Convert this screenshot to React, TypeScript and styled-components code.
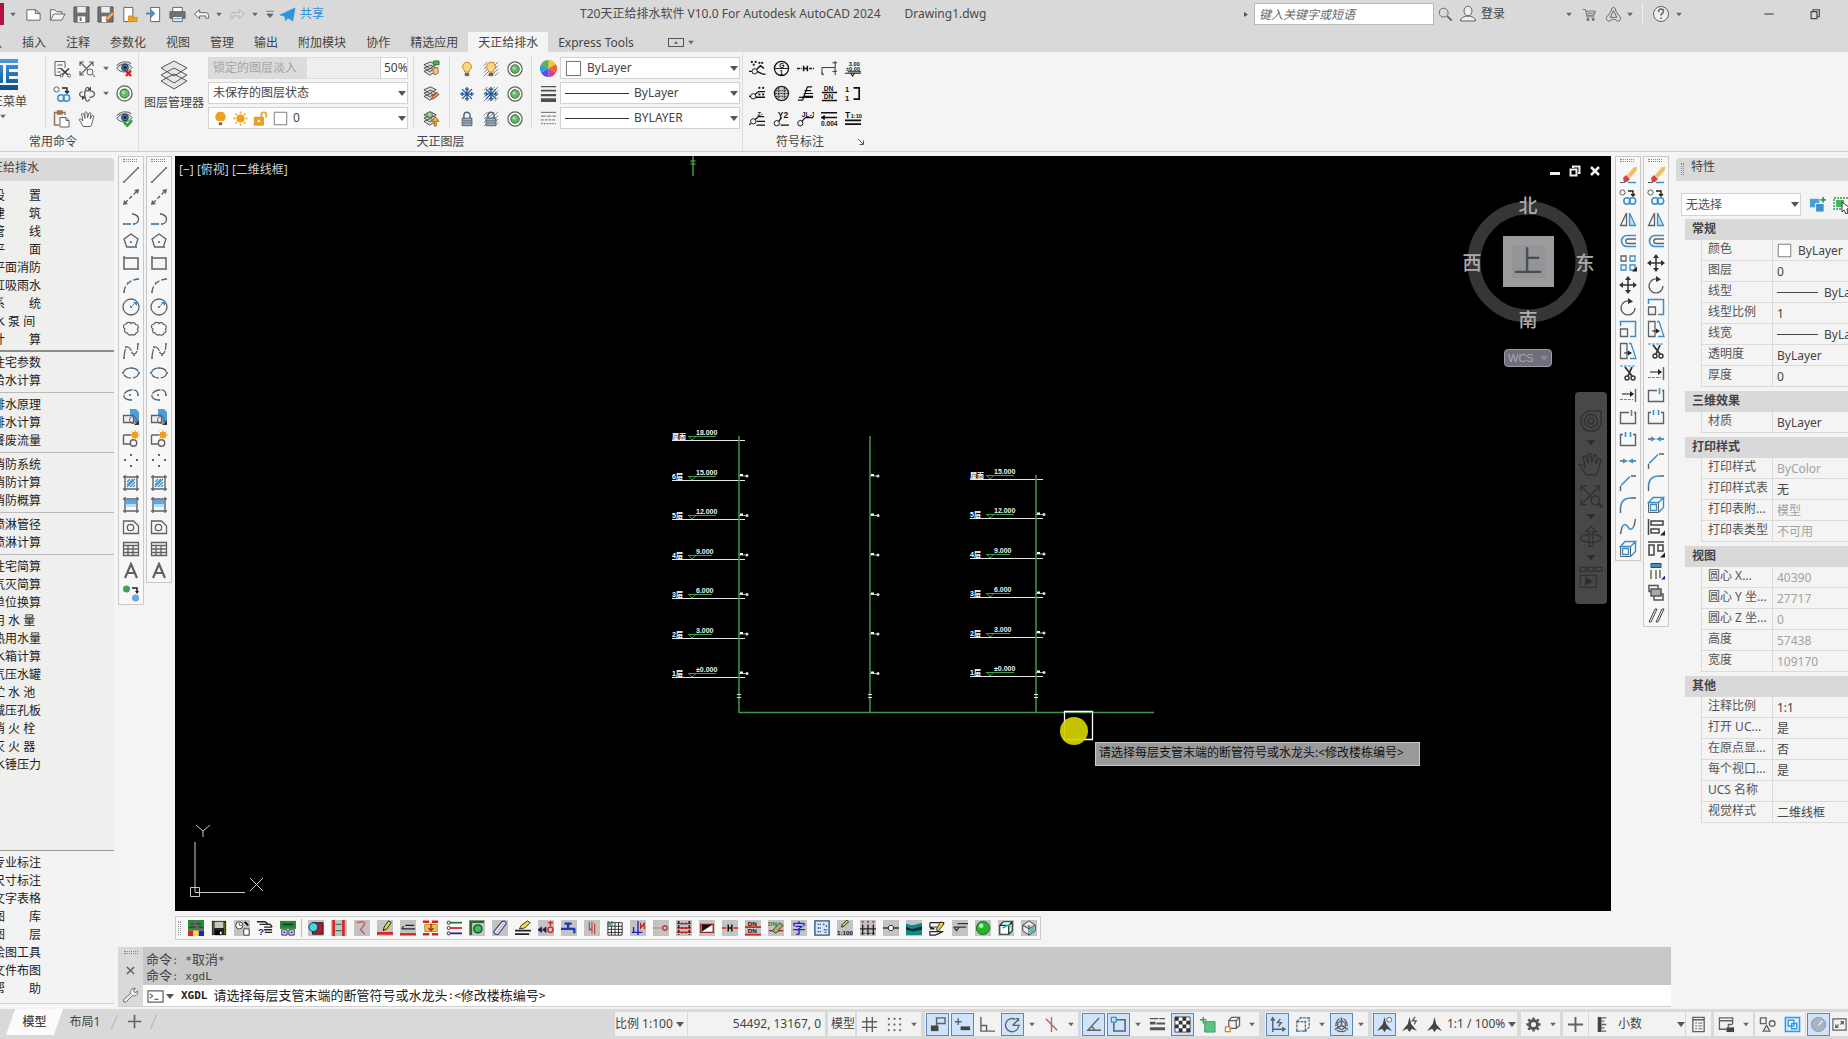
import React, { ReactNode } from 'react';
import styled, { createGlobalStyle, css } from 'styled-components';

const sans = '"Noto Sans", "Noto Sans CJK SC", sans-serif';
const mono = '"DejaVu Sans Mono", "Noto Sans CJK SC", monospace';
const G = '#5f6164';
const B = '#3d8fcb';
const O = '#f0a020';

const GlobalStyle = createGlobalStyle`
  * { box-sizing: border-box; }
  html, body, #root { margin: 0; height: 100%; }
  body { overflow: hidden; background: #f4f4f4; color: #444; font: 12px/18px ${sans}; }
  button, input, select { font: inherit; color: inherit; margin: 0; }
`;

/* ---------- glyphs ---------- */

const T = ({ x, y, s, c = '#111', children }: { x: number; y: number; s: number; c?: string; children: ReactNode }) => (
  <text x={x} y={y} fontSize={s} fill={c} stroke="none" fontWeight="700" fontFamily='"Liberation Sans", sans-serif'>{children}</text>
);
const Dots = ({ at, c = B }: { at: number[][]; c?: string }) => (
  <>{at.map(([x, y]) => <rect key={`${x}-${y}`} x={x - 1} y={y - 1} width="2" height="2" fill={c} stroke="none" />)}</>
);
const Stack = (
  <g stroke="#444" fill="#ddd">
    <path d="M1 12l7-3 6 3-7 4zM1 8.500l7-3 6 3-7 4zM1 5l7-3 6 3-7 4z" />
  </g>
);
const Hatch = <path d="M1 5l4-4M1 9l8-8M1 13l12-12M1 17L17 1M5 17L17 5M9 17l8-8M13 17l4-4" stroke="#777" strokeWidth="1" />;
const Bulb = <g><path d="M9 1.500a5 5 0 0 0-5 5c0 2.500 2.500 3.500 2.500 6h5c0-2.500 2.500-3.500 2.500-6a5 5 0 0 0-5-5z" fill="#fbd580" stroke="#c07c1c" /><path d="M7 14h4v2.500H7z" fill="#666" stroke="#555" /></g>;
const Snow = <path d="M9 1v16M1 9h16M3.500 3.500l11 11M14.500 3.500l-11 11M7 3l2 2 2-2M7 15l2-2 2 2M3 7l2 2-2 2M15 7l-2 2 2 2" stroke="#1d5595" strokeWidth="1.400" />;
const Lock = <g><path d="M5.500 8V5a3.500 3.500 0 0 1 7 0v3" stroke="#566270" strokeWidth="1.600" /><path d="M3.500 8h11v8.500h-11z" fill="#9fb0c2" stroke="#455668" /><path d="M4 11h10M4 13.500h10" stroke="#566b80" /></g>;
const Eye = <g><path d="M1 9C4 3 13 2 17 8c-4 6-12 6-16 1z" fill="#d7e4f2" stroke="#555" /><circle cx="9.500" cy="8" r="3.600" fill="#3f76ae" stroke="#234" /><circle cx="9.500" cy="8" r="1.400" fill="#111" stroke="none" /><path d="M1 6C5 1 13 1 16 4" stroke="#777" strokeWidth="1.300" /></g>;
const Hand = <path d="M5.500 16.500C3 13 2.500 11.500 1 9.500c1-1 2-.5 4 1.500L3.500 4c1-.9 2-.4 2.300.6L7 8.500 6.800 2.500c.8-1 2-.7 2.200.3L9.500 8l1.500-5c.9-.7 1.900-.2 1.800.8L12.200 9l2-3.500c1-.5 1.800.2 1.500 1-1 3.500-1.200 7-3.200 10z" />;
const Cube3 = <g><path d="M1.500 6.500h10v10h-10z" /><path d="M1.500 6.500L6 1.500h10.500l-5 5zM11.500 16.500l5-5v-10M3.500 8.500h6v6h-6z" stroke={B} strokeWidth="1.400" /></g>;
const Compass = <path d="M9 1l1.800 7.500L17 16l-5.500-2.500L9 17l-2.500-3.500L1 16l6.200-7.500z" fill="#444" stroke="none" />;
const Plate = <path d="M0 0h18v18H0z" fill="#c3c3c3" stroke="none" />;

const glyphs: Record<string, ReactNode> = {
  new: <path d="M2 4h9l5 4v7H2zM11 4v4h5" fill="#fff" />,
  open: <path d="M1.500 15V4h4.500l2 2h5.500v2.500M1.500 15L5 8.500h12L13.500 15z" fill="#f3f3f3" />,
  save: <g><path d="M1 1h16v16H1z" fill="#6d6f72" stroke="#555" /><path d="M4.500 1h9v6h-9z" fill="#eee" stroke="none" /><path d="M5 11h8v6H5z" fill="#fff" stroke="none" /><path d="M7 12h2v4H7z" fill="#666" stroke="none" /></g>,
  saveas: <g><path d="M1 1h16v16H1z" fill="#6d6f72" stroke="#555" /><path d="M4.500 1h9v6h-9z" fill="#eee" stroke="none" /><path d="M5 11h5v6H5z" fill="#fff" stroke="none" /><path d="M9.500 15.500l1-3.500 5.500-5.500 2 2-5.500 5.500z" fill="#f2b45b" stroke="#e06c3c" /></g>,
  webopen: <g><path d="M3 1.500h9.500v15H3z" fill="#fff" /><path d="M8 16.500v-6h3l1 1.500h5v4.500z" fill={O} stroke="#d88f16" /></g>,
  websave: <g><path d="M6 1.500h9.500v15H6z" fill="#fff" /><path d="M1 8h8M6 4.500L9.500 8 6 11.500" stroke={B} strokeWidth="2" /></g>,
  print: <g><path d="M4 6V1.500h10V6" fill="#fff" /><path d="M1 6h16v7H1z" fill="#717377" /><path d="M4 11h10v5.500H4z" fill="#eaf3fb" /><path d="M5.500 13.500h7" stroke={B} /></g>,
  undo: <path d="M1.500 8.500L7 4v3h6.500q3 0 3 3v3h-3v-2.500H7v3z" fill="#f5f5f5" />,
  redo: <path d="M16.500 8.500L11 4v3H4.500q-3 0-3 3v3h3v-2.500H11v3z" stroke="#b5b5b5" />,
  more: <path d="M4 5.500h10M5 9l4 4.500L13 9z" fill={G} />,
  share: <path d="M1 9.500L17 2l-2.500 14-5-3.500-2.500 3-1-5zM6 10.500L15 4l-6 8.500" fill="#2c9ae8" stroke="#1f86d0" strokeWidth=".6" />,
  search: <g><circle cx="7.500" cy="7.500" r="5" /><path d="M11.500 11.500l5 5" strokeWidth="2" /></g>,
  user: <g><ellipse cx="9" cy="6" rx="4" ry="4.800" fill="#eee" /><path d="M1.500 16c0-3.500 3-4 5-4.800h5c2 .8 5 1.300 5 4.800z" fill="#eee" /></g>,
  cart: <g><path d="M1 3h3l2 9h9M4.500 5h11.500l-1.500 5H6M6 7.500h9" /><circle cx="7" cy="15" r="1.200" fill={G} /><circle cx="13.500" cy="15" r="1.200" fill={G} /></g>,
  autodesk: <g><path d="M9 1.500c2 0 2 2 2.800 4.500l3.700 5c2 1.500 1 5-1.500 5-2 0-2.500-2-5-2s-3 2-5 2c-2.500 0-3.500-3.500-1.500-5l3.700-5C7 3.500 7 1.500 9 1.500z" /><path d="M9 5l3.500 7h-7z" /></g>,
  help: <g><circle cx="9" cy="9" r="7.500" fill="#eee" /><path d="M6.500 7q0-3 2.500-3t2.500 2.300c0 2-2.500 2-2.500 4.200" strokeWidth="1.600" /><path d="M9 12.500v1.500" strokeWidth="1.800" /></g>,
  min: <path d="M3 9h12" strokeWidth="1.300" stroke="#333" />,
  restore: <path d="M4 6h7.500v9H4zM6.500 6V3.500h8v9h-3" strokeWidth="1.500" stroke="#444" />,
  /* common commands */
  cut: <g><path d="M12 8V1.500H2v14h6M4.500 5h5M4.500 8.500h4M4.500 12h3" /><path d="M8 8.500l7 6.500M16 8.500L9 15" stroke="#333" strokeWidth="1.500" /><circle cx="8.500" cy="15.500" r="1.500" /><circle cx="16" cy="15.500" r="1.500" /></g>,
  zoomx: <g><path d="M2 2l8 8M15 2L2 15M2 6V2h4M11 2h4v4M2 11v4h4" strokeWidth="1.200" /><circle cx="12" cy="12" r="3" fill="#f4f4f4" /><path d="M14.500 14.500l2.500 2.500" stroke="#998" strokeWidth="1.600" /></g>,
  eyex: <g>{Eye}<path d="M10.500 11.500l5.500 5.500M16 11.500l-5.500 5.500" stroke="#c22" strokeWidth="2.400" /></g>,
  eyeok: <g>{Eye}<path d="M8.500 13l3.500 3.500 5-5.500" stroke="#2a2" strokeWidth="2.800" /></g>,
  copy: <g><circle cx="3.500" cy="4.500" r="2.600" /><path d="M9 3h5v5M12 6l2 2 2-2" stroke="#222" strokeWidth="1.400" /><circle cx="8" cy="13" r="3.200" stroke={B} strokeWidth="1.500" /><circle cx="13.500" cy="13" r="3.200" stroke={B} strokeWidth="1.500" /></g>,
  orbit: <g strokeWidth="1.300"><path d="M6 12.500C1 12 0 8 4.500 6.500M8 5.800c5-.8 9 1 8.500 3.500-.3 1.700-2.500 2.800-5 3.200" /><path d="M11.500 14c-1 3-3 3.500-4 0-1-3-1-7 0-9.500 1-3 3-2.500 4 0" /><path d="M4 10.500l3.500 2-3.500 2.500zM9.500 4.500l3.500 1V1.500z" fill="#444" stroke="none" /></g>,
  target: <g><circle cx="9" cy="9" r="8" stroke="#5b6a5b" strokeWidth="1.400" fill="#f5f8f5" /><circle cx="9" cy="9" r="4.800" fill="#67b96a" stroke="#3e5e40" /><circle cx="8" cy="8" r="1.800" fill="#a9dfaa" stroke="none" /></g>,
  paste: <g><path d="M12 5V2.500H1.500V15H6M4.500 1h4.500v3H4.500z" stroke="#9a7355" strokeWidth="1.500" /><path d="M7 7.500h6l3 3V17H7zM13 7.500v3h3" fill="#fff" /></g>,
  pan: <g fill="#fff">{Hand}</g>,
  layerA: <g>{Stack}<path d="M11 1h6v4h-6z" fill="#4bb25e" stroke="#2a7a3b" /><path d="M10 9l6-1v6l-4 2z" fill="#f3c38b" stroke="#a2703c" /></g>,
  layerB: <g>{Stack}<path d="M9 15l1-3 5-4 2 2-5 4z" fill="#e89466" stroke="#8f4a23" /></g>,
  layerC: <g>{Stack}<circle cx="7" cy="5" r="3" fill="#9ccf8e" /><path d="M12 17v-5H9l4-5 4 5h-3v5z" fill="#f7b32b" stroke="#a06a10" /></g>,
  bulb: Bulb, bulbh: <g>{Hatch}{Bulb}</g>, snow: Snow, snowh: <g>{Hatch}{Snow}</g>, lock: Lock, lockh: <g>{Hatch}{Lock}</g>,
  bulbO: <g><path d="M9 1a6 6 0 0 0-3.500 11h7A6 6 0 0 0 9 1z" fill={O} stroke="none" /><path d="M7 13.500h4v3.500H7z" fill="#666" stroke="none" /></g>,
  sunO: <g stroke={O} strokeWidth="1.800"><circle cx="9" cy="9" r="4" fill={O} /><path d="M9 .5v2.500M9 15v2.500M.5 9H3M15 9h2.500M3 3l1.700 1.700M13.300 13.300L15 15M15 3l-1.700 1.700M4.700 13.300L3 15" /></g>,
  unlockO: <g><path d="M1.500 7.500h11v9.500h-11z" fill={O} stroke="#d98f14" /><path d="M10 7.500V4.500q0-3 3-3t3 3V8" stroke={O} strokeWidth="2" /><circle cx="7" cy="12" r="1.500" fill="#fff" stroke="none" /></g>,
  box: <path d="M1.500 1.500h15v15h-15z" fill="#fff" stroke="#666" />,
  wheel: <g stroke="none"><path d="M9 9V0a9 9 0 0 1 7.800 4.500z" fill="#f7c52f" /><path d="M9 9l7.800-4.500a9 9 0 0 1 0 9z" fill="#f0642f" /><path d="M9 9l7.800 4.500A9 9 0 0 1 9 18z" fill="#d43f9c" /><path d="M9 9v9a9 9 0 0 1-7.800-4.500z" fill="#5f4fd0" /><path d="M9 9l-7.800 4.500a9 9 0 0 1 0-9z" fill="#2f9be0" /><path d="M9 9L1.200 4.500A9 9 0 0 1 9 0z" fill="#55b845" /></g>,
  weights: <g fill="#505050" stroke="none"><path d="M1 1h16v1.500H1zM1 5h16v2H1zM1 9.500h16V12H1zM1 14h16v4H1z" /></g>,
  types: <g stroke="#666" strokeWidth="1"><path d="M1 2.500h16" /><path d="M1 6.500h16" strokeDasharray="5 1" /><path d="M1 10.500h16" strokeDasharray="3 1" /><path d="M1 14.500h16" strokeDasharray="2 1" /></g>,
  /* symbol annotation */
  s1: <g stroke="#111"><circle cx="6" cy="12" r="2.800" /><path d="M0 12h3M8 10l4-4 4 3M8.500 12l6 3h3" strokeWidth="1.400" /><Dots c="#111" at={[[3, 2], [7, 2], [5, 5], [14, 3], [11, 3]]} /></g>,
  s2: <g stroke="#111"><circle cx="9" cy="9" r="7.500" strokeWidth="1.400" /><path d="M1 9h16" /><T x={6.500} y={8} s={7}>G</T><T x={7} y={16} s={7}>1</T></g>,
  s3: <g stroke="#111" strokeWidth="1.600"><path d="M0 9h5M13 9h5" strokeDasharray="3 1" /><path d="M7 6v6M11 6v6M7 9h4" /></g>,
  s4: <path d="M1 16V8h14M15 1v15M12 3h5M12 12h5M1 13l2 3" stroke="#333" />,
  s5: <g stroke="#222"><T x={4} y={6} s={6}>3.00</T><path d="M0 14h17M3 12.500h14M6 14l2 3 2-3z" strokeWidth="1.200" /><T x={1} y={11.500} s={6}>±0.00</T></g>,
  s6: <g stroke="#111"><circle cx="4.500" cy="12" r="2.800" /><path d="M0 12h2M6.500 10L10 7h7M7 13h10" strokeWidth="1.400" /><Dots c="#111" at={[[11, 3], [15, 3], [11, 10], [15, 10]]} /></g>,
  s7: <g stroke="#222"><circle cx="9" cy="9" r="7.500" fill="#ccc" strokeWidth="1.400" /><path d="M3 6h12M2 9h14M3 12h12M6 3v12M12 3v12" strokeDasharray="2 1" /></g>,
  s8: <path d="M1 16h5L11 2h5M8 6h7M7 9h10M6 12h11M2 13h15" stroke="#111" strokeWidth="1.300" />,
  s9: <g stroke="#111"><T x={3} y={6.500} s={7}>DN</T><path d="M1 8h16M1 16.500h16" strokeWidth="1.600" /><T x={3} y={15} s={7}>DN</T></g>,
  s10: <g stroke="#111"><T x={0} y={7} s={8}>1</T><T x={0} y={17} s={8}>1</T><path d="M9 3h6v12H9" strokeWidth="1.800" /></g>,
  s11: <g stroke="#111"><circle cx="4.500" cy="12" r="2.800" /><path d="M0 15h2M6.500 10L10 7h6M8 12h9M8 16h9" strokeWidth="1.300" /><T x={9} y={6} s={6}>Z-</T></g>,
  s12: <g stroke="#111"><circle cx="4" cy="14" r="2.800" /><path d="M6 12l3-4M8 16h9" strokeWidth="1.500" /><T x={5} y={8} s={9}>Y2</T></g>,
  s13: <g stroke="#111"><circle cx="3.500" cy="14" r="2.800" /><path d="M5 12l4-4h8" strokeWidth="1.300" /><T x={5} y={7} s={7}>JL-1</T></g>,
  s14: <g stroke="#111"><path d="M0 3h17M0 8h17M4 6L1 8l3 2" strokeWidth="1.600" /><T x={0} y={16.500} s={7}>0.004</T></g>,
  s15: <g stroke="#111"><T x={0} y={8} s={9}>T</T><T x={6} y={8} s={6}>1:10</T><path d="M0 11h17M0 15h17" strokeWidth="2" /></g>,
  /* draw tools */
  line: <g><path d="M2 16L16 2" strokeWidth="1.300" /><Dots at={[[2, 16], [16, 2]]} /></g>,
  xline: <g><path d="M3 15L15 3" strokeWidth="1.300" strokeDasharray="4 2" /><path d="M1 17l1-5 4 4zM17 1l-5 1 4 4z" fill={G} stroke="none" /><Dots at={[[9, 9]]} /></g>,
  pline: <g><path d="M2 14h7M12 14q4-.5 4.500-4.500T11 4" strokeWidth="1.300" /><Dots at={[[2, 14], [11, 4], [12, 14], [8, 14]]} /></g>,
  polygon: <g><path d="M9 2l7 5-2.700 8H4.700L2 7z" strokeWidth="1.300" /><Dots at={[[9, 10], [14, 15]]} /></g>,
  rect: <g><path d="M2 4h14v11H2z" strokeWidth="1.500" /><Dots at={[[2, 3], [16, 15]]} /></g>,
  arc: <g><path d="M2 16Q3 5 16 3" strokeDasharray="6 2" strokeWidth="1.300" /><Dots at={[[2, 16], [6, 7], [16, 3]]} /></g>,
  circle: <g><circle cx="9" cy="9" r="8" strokeWidth="1.300" /><path d="M9 9l4-4" stroke={B} /><path d="M11 4h4v4z" fill={B} stroke="none" /><Dots at={[[9, 9]]} /></g>,
  cloud: <path d="M3 9a2.600 2.600 0 0 1 1-5 3 3 0 0 1 5-.5 2.600 2.600 0 0 1 4.500 1 2.600 2.600 0 0 1 2 4.500 2.500 2.500 0 0 1-1.500 4 2.800 2.800 0 0 1-4.500 1.500 2.500 2.500 0 0 1-4-1.500A2.500 2.500 0 0 1 3 9z" strokeWidth="1.200" />,
  spline: <g><path d="M2 15Q3 4 6 5t4 6q5 4 6-8" strokeDasharray="8 1" strokeWidth="1.300" /><Dots at={[[2, 16], [4, 5], [12, 13], [16, 2]]} /></g>,
  ellipse: <g><ellipse cx="9" cy="9" rx="7.500" ry="5" strokeDasharray="8 2" strokeWidth="1.300" /><Dots at={[[1, 9], [9, 4], [17, 9]]} /></g>,
  earc: <g><path d="M8 14Q1 13 2 9t7-5 7 4" strokeWidth="1.300" strokeDasharray="9 1" /><Dots at={[[8, 9], [16, 9], [9, 14]]} /></g>,
  insert: <g><path d="M8 1h6l3 3v10h-9z" fill="#4d9fdc" stroke="none" /><path d="M1.500 7.500h10v7h-10z" fill="#eee" strokeWidth="1.300" /><circle cx="11" cy="12" r="3.500" /><path d="M12 17h5v-5z" fill="#333" stroke="none" /></g>,
  mkblock: <g><path d="M1.500 5h8M1.500 5v9H9" strokeWidth="1.400" /><circle cx="11.500" cy="13" r="3.200" strokeWidth="1.400" /><g stroke={O} strokeWidth="1.600"><circle cx="13" cy="5" r="2.500" fill={O} /><path d="M13 0v10M8 5h10M9.500 1.500l7 7M16.500 1.500l-7 7" strokeWidth="1" /></g></g>,
  point: <Dots c={G} at={[[9, 3], [3, 8], [15, 8], [9, 14]]} />,
  hatch: <g><path d="M1 3h16M1 15h16M3 1v16M15 1v16" strokeWidth="1.400" /><path d="M5 8l3-3M5 11l6-6M5 13l8-8M8 13l5-5M11 13l2-2" stroke={B} strokeWidth="1.200" /></g>,
  grad: <g><path d="M4 4h10v7H4z" fill="#5aa9e4" stroke="none" /><path d="M4 8h10v3H4z" fill="#b9dcf5" stroke="none" /><path d="M1 3h16M1 15h16M3 1v16M15 1v16" strokeWidth="1.400" /></g>,
  region: <g><path d="M1.500 3h10l5 5v7.500h-15z" strokeWidth="1.300" /><circle cx="8.500" cy="9.500" r="3.200" strokeWidth="1.300" /></g>,
  table: <path d="M1.500 2.500h15v13h-15zM1.500 5.500h15M1.500 9h15M1.500 12.500h15M6 5.500v10M11 5.500v10" strokeWidth="1.300" />,
  text: <path d="M3 16L9 2l6 14M5.500 11h7" strokeWidth="2.200" />,
  swap: <g><circle cx="4.500" cy="5" r="3.500" fill="#39a35a" stroke="none" /><path d="M10 4h5v3" stroke="#222" strokeWidth="1.500" /><path d="M13 7l2 3 2-3z" fill="#222" stroke="none" /><circle cx="13.500" cy="14" r="3.500" fill="#6aa5d8" stroke="none" /></g>,
  /* modify tools */
  erase: <g><path d="M8 9l7-8h3v3l-7 8z" fill="#f6bd62" stroke="none" /><path d="M4 12l3-3 4 4-3 3H5z" fill="#d9433f" stroke="none" /><path d="M1 16.500h5" /><path d="M9 16.500h8" stroke={B} strokeWidth="1.500" /></g>,
  mirror: <g><path d="M7.500 3v12.500H1.500z" strokeWidth="1.300" /><path d="M10.500 3v12.500h6z" fill="#bfdff5" stroke={B} strokeWidth="1.300" /></g>,
  offset: <g><path d="M17 3.500H8a5.500 5.500 0 0 0 0 11h9" stroke={B} strokeWidth="1.600" /><path d="M17 7H9a2.200 2.200 0 0 0 0 4.500h8" strokeWidth="1.300" /></g>,
  array: <g strokeWidth="1.300"><path d="M2 2h5v5H2z" /><path d="M11 2h5v5h-5zM2 11h5v5H2zM11 11h5v5h-5z" stroke={B} /><path d="M13 17.500h5v-5z" fill="#222" stroke="none" /></g>,
  move: <g><path d="M9 3v12M3 9h12" stroke="#333" strokeWidth="1.500" /><path d="M9 0l3 4H6zM9 18l3-4H6zM0 9l4-3v6zM18 9l-4-3v6z" fill="#333" stroke="none" /></g>,
  rotate: <g><path d="M11 3.200A7 7 0 1 0 16 10" strokeWidth="1.400" /><path d="M9 0l5 3.500L9 6z" fill="#333" stroke="none" /></g>,
  scale: <g><path d="M1.500 9h7v7.500h-7z" strokeWidth="1.300" /><path d="M1.500 6V1.500h15v15H11" stroke={B} strokeWidth="1.500" /></g>,
  stretch: <g><path d="M8 1.500H1.500v15H8z" strokeWidth="1.300" /><path d="M10 1.500h2l5 15h-6" stroke={B} strokeWidth="1.300" /><path d="M5 11h6" stroke="#222" /><path d="M9 8.500l4 2.500-4 2.500z" fill="#222" stroke="none" /></g>,
  trim: <g><path d="M1 2h16" stroke={B} strokeDasharray="3 1" /><path d="M6 3l7 9M13 3l-4 9" stroke="#333" strokeWidth="1.800" /><circle cx="8" cy="14" r="2" stroke="#333" strokeWidth="1.400" /><circle cx="14" cy="14" r="2" stroke="#333" strokeWidth="1.400" /></g>,
  extend: <g><path d="M16.500 3v13M3 8h9" strokeWidth="1.400" /><path d="M11 5l4 3-4 3z" fill="#222" stroke="none" /><path d="M1 13.500h13" stroke={B} strokeDasharray="3 1" /></g>,
  breakpt: <g><path d="M10 4.500H1.500v11h15v-11H15" strokeWidth="1.400" /><path d="M12.500 2v6" stroke={B} strokeWidth="1.600" /></g>,
  breakg: <g><path d="M4 4.500H1.500v11h15v-11H14" strokeWidth="1.400" /><path d="M6.500 2v5M11.500 2v5" stroke={B} strokeWidth="1.600" /></g>,
  join: <g><path d="M1 9h5M12 9h5" strokeWidth="1.300" /><path d="M4 6.500L9 9l-5 2.500zM14 6.500L9 9l5 2.500z" fill={B} stroke="none" /></g>,
  chamfer: <g><path d="M1.500 17v-5M12 2h5" strokeWidth="1.400" /><path d="M2 11.500L11 2.500" stroke={B} strokeWidth="1.600" /></g>,
  fillet: <g><path d="M1.500 17v-5M12 2h5" strokeWidth="1.400" /><path d="M1.500 12Q2 2 12 2" stroke={B} strokeWidth="1.600" /></g>,
  blend: <g><path d="M1.500 16l1.500-7M15 8l1.500-7" strokeWidth="1.400" /><path d="M3 9q3-5 6 0t6-1" stroke={B} strokeWidth="1.600" /></g>,
  explode: Cube3,
  alignA: <g><path d="M1.500 1v16M4 3h12v4H4zM4 11h8v4H4z" strokeWidth="1.500" stroke="#444" /><path d="M13 17.500h5v-5z" fill="#222" stroke="none" /></g>,
  alignB: <g><path d="M1 2h16M2 5h5v10H2zM11 5h5v6h-5z" strokeWidth="1.500" stroke="#444" /><path d="M13 17.500h5v-5z" fill="#222" stroke="none" /></g>,
  alignC: <g><path d="M4 1.500h10v4H4z" fill="#4c8fc8" stroke="#346" /><path d="M4 8v9M9 8v9M13 8v8" strokeWidth="1.800" stroke="#787" /><path d="M14 17.500h4v-4z" fill="#22a" stroke="none" /></g>,
  order: <g strokeWidth="1.500" stroke="#555"><path d="M2 1.500h9v6H2z" /><path d="M7 10h9v6H7z" /><path d="M4 5h10v7H4z" fill="#aaa" /></g>,
  slashes: <path d="M2 16L8 3h2L4 16zM9 16l6-13h2l-6 13z" stroke="#444" />,
  pickadd: <g stroke="none"><path d="M1 3h10v9H1z" fill="#4d9fdc" /><path d="M7 8h9v9H7z" fill="#3d8fcb" stroke="#f4f4f4" /><path d="M12 4h6M15 1v6" stroke="#2da04c" strokeWidth="1.800" /></g>,
  qselect: <g><path d="M1 2h16v11H1z" stroke="#2da04c" strokeWidth="1.400" strokeDasharray="2 1" /><path d="M3 4h8v7H3z" fill="#48b365" stroke="none" /><path d="M9 6l8 6-3 1 1 4-2 1-2-4-2 2z" fill="#fff" stroke="#333" /></g>,
  wrench: <path d="M2 16l-.5-2.500L9 7c-1-3 1-6 5-5.500l-2 2.500 2 2 2.500-1.500C17 8 14 10 11 9l-7 7z" fill="#eee" />,
  close: <path d="M4 4l10 10M14 4L4 14" strokeWidth="2" />,
  prompt: <g><path d="M1 3h16v12H1z" fill="#fff" strokeWidth="1.300" /><path d="M3 6l3 2.500L3 11M8 12h4" strokeWidth="1.200" /></g>,
  plus: <path d="M9 1v16M1 9h16" strokeWidth="2" />,
  /* pipe toolbar */
  p1: <g stroke="none"><path d="M0 0h18v12H0z" fill="#2c8b38" /><path d="M3 4h12M1 8h16" stroke="#174d1f" strokeWidth="1.500" /><path d="M6 2l6 9" stroke="#a04090" strokeWidth="3" /><path d="M0 12h6v6H0z" fill="#d22" /><path d="M6 12h6v6H6z" fill="#fd3" /><path d="M12 12h6v6h-6z" fill="#22c" /></g>,
  p2: <g stroke="none"><path d="M1 1h16v16H1z" fill="#222" /><path d="M4 2h10v7H4z" fill="#c8c8b8" /><path d="M2 2h1v14H2zM15 3h1v13h-1z" fill="#880" /><path d="M5 12h7v5H5z" fill="#000" /><path d="M10 13h2v3h-2z" fill="#fff" /></g>,
  p3: <g>{Plate}<circle cx="6" cy="6" r="4" fill="#fff" stroke="#333" /><path d="M6 3v3h3" stroke="#a33" /><path d="M11 10h6v7h-6z" fill="#fff" stroke="#333" /><path d="M12 2l4 4" stroke="#000" strokeWidth="2" /></g>,
  p4: <g stroke="#222"><path d="M0 2h9l4 3M3 5h12l2 3M8 8h9M8 11h9M9 14h8" strokeWidth="1.500" /><T x={1} y={17} s={11} c="#22a">?</T></g>,
  p5: <g stroke="none"><path d="M0 1h18v9H0z" fill="#28863a" /><path d="M3 5h12" stroke="#0e4419" strokeWidth="2" /><path d="M2 11h6v6H2zM10 11h6v6h-6z" fill="#dde" stroke="#225" /><Dots c="#22a" at={[[5, 14], [13, 14]]} /></g>,
  p6: <g>{Plate}<path d="M5 3h12v13H5z" fill="#a6202a" stroke="#222" /><circle cx="6" cy="8" r="5" fill="#3fd8e8" stroke="#126" /></g>,
  p7: <g>{Plate}<path d="M3 0v18M14 0v18" stroke="#d22" strokeWidth="3" /><path d="M5 5h7M12 12H5" stroke="#285" strokeWidth="1.500" /></g>,
  p8: <g>{Plate}<path d="M3 3q12-3 8 3t-4 5 5 5" stroke="#c55" strokeWidth="1.500" /></g>,
  p9: <g>{Plate}<path d="M0 15h18" stroke="#d22" strokeWidth="3" /><path d="M7 12l1-4 5-7 3 2-5 7z" fill="#dd3" stroke="#111" /></g>,
  p10: <g>{Plate}<path d="M0 16h18" stroke="#d22" strokeWidth="2.500" /><path d="M2 10h15M6 6h10M2 10l2-3" stroke="#222" strokeWidth="1.300" /></g>,
  p11: <g><path d="M0 2h18M0 16h18" stroke="#d22" strokeWidth="3" strokeDasharray="7 3" /><path d="M2 5h14v8H2z" fill="#e8c84a" stroke="#a83" /><path d="M9 4v8M6 9l3 3 3-3" stroke="#a22" strokeWidth="1.500" /></g>,
  p12: <g strokeWidth="2"><path d="M3 3h15" stroke="#2a7a3a" /><path d="M3 9h15" stroke="#d22" /><path d="M3 15h15" stroke="#22a" /><g fill="#fff" stroke="#222" strokeWidth="1"><circle cx="3" cy="3" r="1.800" /><circle cx="3" cy="9" r="1.800" /><circle cx="3" cy="15" r="1.800" /></g></g>,
  p13: <g>{Plate}<path d="M2 17V2h15" stroke="#2a6a2a" strokeWidth="3" /><circle cx="10" cy="10" r="4.500" fill="#3ac04a" stroke="#143" strokeWidth="1.500" /></g>,
  p14: <g>{Plate}<path d="M2 13L11 2q4-2 5 2L7 16q-4 1-5-3z" fill="#eef" stroke="#447" strokeWidth="1.300" /><path d="M5 14l9-11" stroke="#88a" /></g>,
  p15: <g><path d="M0 12h18M0 16h16" stroke="#222" strokeWidth="2" /><path d="M5 10l2-4 7-5 3 2-6 6z" fill="#e8e03a" stroke="#222" /></g>,
  p16: <g>{Plate}<path d="M0 11l4-3v6l-4-3M5 11l4-3v6l-4-3" stroke="#225" fill="#225" /><circle cx="14" cy="11" r="3" stroke="#c22" strokeWidth="1.500" /><path d="M14 1v6M11 3h6" stroke="#c22" strokeWidth="1.500" /></g>,
  p17: <g>{Plate}<path d="M0 10h16M8 10V4M4 4h8M15 10v5" stroke="#23b" strokeWidth="2.600" /></g>,
  p18: <g>{Plate}<path d="M6 2v10M9 2v13M12 4v12M6 12l3-3" stroke="#b44" strokeWidth="1.300" /></g>,
  p19: <g stroke="#222"><path d="M1 3h16v14H1zM1 7h16M1 10.500h16M1 14h16M5 7v10M9 3v14M13 3v14" fill="#fff" /><T x={0} y={7} s={8} c="#383">M</T></g>,
  p20: <g>{Plate}<path d="M2 14h12M4 8v6M9 1v16" stroke="#22b" strokeWidth="1.500" /><path d="M12 3v6l4-5v6" stroke="#b22" strokeWidth="1.400" /></g>,
  p21: <g>{Plate}<path d="M0 9h11" stroke="#777" strokeDasharray="3 1" /><circle cx="13.500" cy="9" r="2.500" stroke="#c33" strokeWidth="1.500" /></g>,
  p22: <g>{Plate}<path d="M1 4h16M1 9h16M1 14h16" stroke="#c22" strokeWidth="1.500" /><path d="M3 1v16M15 1v16" stroke="#222" strokeDasharray="3 2" strokeWidth="2" /><Dots c="#a22" at={[[7, 4], [11, 4], [7, 9], [11, 9], [7, 14], [11, 14]]} /></g>,
  p23: <g>{Plate}<path d="M2 5h14v9H2z" fill="#fff" stroke="#922" strokeWidth="1.500" /><path d="M3 13.300V5.300h12z" fill="#111" stroke="none" /></g>,
  p24: <g>{Plate}<path d="M0 9h5M13 9h5" stroke="#d22" strokeWidth="1.500" /><path d="M7 5v8M11 5v8M7 9h4" stroke="#111" strokeWidth="1.700" /></g>,
  p25: <g>{Plate}<path d="M0 8h18M0 16.500h18" stroke="#d22" strokeWidth="2" /><T x={3} y={6.500} s={7}>DN</T><T x={3} y={15} s={7}>DN</T></g>,
  p26: <g>{Plate}<T x={0} y={7} s={7} c="#283">DN</T><path d="M1 12h16" stroke="#b22" strokeWidth="1.600" /><path d="M5 12l8-9 4 3-8 9z" fill="#9b4" stroke="#525" /></g>,
  p27: <g>{Plate}<text x="1.500" y="14.500" fontSize="15" fill="#22c" stroke="none" fontFamily='"Noto Sans CJK SC", sans-serif' fontWeight="500">字</text></g>,
  p28: <g stroke="#24548c"><path d="M1 1h16v16H1z" fill="#dbe9f7" strokeWidth="1.500" /><path d="M4 5h4M4 9h4M4 13h4M11 4v3M14 6v3M11 11h4M12 14h3" strokeWidth="1.500" strokeDasharray="2 1" /></g>,
  p29: <g>{Plate}<path d="M5 8l1-3 5-5 2 2-5 5z" fill="#cc4" stroke="#222" /><T x={0} y={17} s={7}>1:100</T></g>,
  p30: <g>{Plate}<path d="M3 5v12M9 5v12M15 5v12M0 10h18" stroke="#222" strokeWidth="1.500" /><Dots c="#c22" at={[[3, 2], [9, 2], [15, 2]]} /><path d="M1 15h16" stroke="#222" strokeDasharray="2 1" /></g>,
  p31: <g>{Plate}<path d="M0 9h18" stroke="#222" strokeWidth="1.500" /><circle cx="9" cy="9" r="3" fill="#fff" stroke="#222" /></g>,
  p32: <g stroke="none">{Plate}<path d="M0 4l6 2 5-1 7-2v14H0z" fill="#0e8a86" /><path d="M0 8l7 2 11-3v4l-10 2-8-2z" fill="#0a2f38" /></g>,
  p33: <g stroke="#222"><path d="M1 3h16M1 3v5l5 2H1M1 13h15l-9 4H1z" fill="#fff" strokeWidth="1.300" /><path d="M8 11l5-9 4 2-6 8z" fill="#e5d63a" /><path d="M1 8h8" /></g>,
  p34: <g>{Plate}<path d="M2 8h14M6 4h12M2 8l3 4 3-4" stroke="#333" strokeWidth="1.400" /></g>,
  p35: <g>{Plate}<circle cx="9" cy="9" r="7.500" fill="#28b32e" stroke="#176b1b" /><circle cx="7" cy="6.500" r="2.500" fill="#b7f0b8" stroke="none" /></g>,
  p36: <g>{Plate}<path d="M2 6h10v10H2zM2 6l4-4h10l-4 4M12 16l4-4V2" fill="#fff" stroke="#133" strokeWidth="1.300" /><path d="M5 9l8-4" stroke="#2bb" strokeWidth="2" /></g>,
  p37: <g>{Plate}<path d="M9 1l7 5v6l-7 5-7-5V6zM9 6v11M2 6l7 4 7-4" fill="#eee" stroke="#333" /><path d="M9 10l6-3v5l-6 4z" fill="#58c0b8" stroke="none" /></g>,
  /* status bar */
  grid: <path d="M6 1v16M12 1v16M1 6h16M1 12h16" strokeWidth="1.500" />,
  dots: <Dots c={G} at={[[3, 3], [9, 3], [15, 3], [3, 9], [9, 9], [15, 9], [3, 15], [9, 15], [15, 15]]} />,
  infer: <g><path d="M8 2h9v6H8zM8 2v8" strokeWidth="1.500" /><path d="M2 10h8v6H2z" fill="#444" stroke="none" /></g>,
  dyn: <g><path d="M1 6h7M4.500 2.500v7" strokeWidth="1.500" /><path d="M7 11h10v4H7z" fill="#444" stroke="none" /></g>,
  ortho: <path d="M2 1v15h15M2 10h6v6" strokeWidth="1.500" />,
  polar: <g><path d="M15.500 11A7 7 0 1 1 12 3.500M9 10h8M9 10l6-6" strokeWidth="1.400" /><path d="M12 2h4v4z" fill={G} stroke="none" /></g>,
  iso: <g strokeWidth="1.400"><path d="M9 1v16" stroke="#4a9a5a" /><path d="M3 3l12 12" stroke="#c55" /></g>,
  otrack: <path d="M15 2L3 15h14M7 11l3 3" strokeWidth="1.500" />,
  osnap: <g><path d="M4 4h12v12H4z" strokeWidth="1.600" /><path d="M1.500 1.500h5v5h-5z" fill="#cfe3fa" stroke={B} strokeWidth="1.400" /></g>,
  lwt: <g fill="#555" stroke="none"><path d="M1 2h9v1.500H1zM11 2h6v1.500h-6zM1 6h6v3H1zM8 7h9v2H8zM1 12h16v3H1z" /></g>,
  trans: <g><path d="M1 1h16v16H1z" fill="#fff" stroke="#444" /><path d="M1 1h4v4H1zM9 1h4v4H9zM5 5h4v4H5zM13 5h4v4h-4zM1 9h4v4H1zM9 9h4v4H9zM5 13h4v4H5zM13 13h4v4h-4z" fill="#333" stroke="none" /></g>,
  cycle: <g><path d="M6 6h11v11H6z" fill="#5fbf84" stroke="#3c9a60" /><path d="M1 4h7M4.500 1v7" stroke="#3a4" strokeWidth="1.600" /></g>,
  osnap3: <g><path d="M5 5l3-3.500h8.500V10L13 13M5 5h8v8H5zM13 5l3.500-3.500" strokeWidth="1.300" /><path d="M1.500 11.500h5v5h-5z" fill="#fff" stroke="#d88030" strokeWidth="1.400" /></g>,
  ducs: <g strokeWidth="1.500"><path d="M4 17V3M2 5l2-3 2 3M4 14h12M14 12l3 2-3 2" /><path d="M12 3l-3 4h4l-3 4" /></g>,
  filter: <g><path d="M3 6h9v10H3zM3 6l4-4h9v10l-4 4" strokeWidth="1.300" strokeDasharray="3 1" /><Dots at={[[3, 6], [12, 6], [3, 16], [12, 16], [7, 2], [16, 2]]} /></g>,
  gizmo: <g strokeWidth="1.300"><path d="M9 5l4 2.500v4.500l-4 2.500-4-2.500V7.500z" /><path d="M9 10V1.500M9 10l-7 4.500M9 10l7 4.500" strokeWidth="1.600" /><path d="M3 11q0-6 4-8M15 11q0-6-4-8M4 15q5 3 10 0" /></g>,
  annoA: <g>{Compass}<circle cx="14" cy="4" r="2.500" fill="#fff" /></g>,
  annoB: <g>{Compass}<path d="M15 1l-3 4h4l-2 4" strokeWidth="1.500" /></g>,
  annoC: Compass,
  gear: <g><circle cx="9" cy="9" r="4.200" strokeWidth="3" stroke="#555" /><path d="M9 1.500v3M9 13.500v3M1.500 9h3M13.500 9h3M3.500 3.500l2 2M12.500 12.500l2 2M14.500 3.500l-2 2M5.500 12.500l-2 2" strokeWidth="2.500" stroke="#555" /></g>,
  ruler: <g><path d="M5 1h4v16H5z" fill="#444" stroke="none" /><path d="M9 2h5M9 5.500h3M9 9h5M9 12.500h3M9 16h5" strokeWidth="1.400" /></g>,
  props: <g><path d="M3 1.500h12v15H3zM3 4h12" strokeWidth="1.400" /><path d="M5.500 7.500h2M9 7.500h4M5.500 10.500h2M9 10.500h4M5.500 13.500h2M9 13.500h4" /></g>,
  lockui: <g><path d="M9 14H1.500V2h14v7M1.500 5h14" strokeWidth="1.400" /><path d="M9 12h8v5H9z" fill="#444" stroke="none" /><path d="M11 12V9h4" strokeWidth="1.400" /></g>,
  isolate: <g strokeWidth="1.400"><path d="M1.500 2h6v6h-6z" /><circle cx="14" cy="8" r="3" /><path d="M8 10l3.500 6h-7z" /></g>,
  hardware: <g stroke="#2f9be8" strokeWidth="1.600"><path d="M1.500 1.500h15v15h-15z" fill="#d5ecfc" /><path d="M4.500 4.500h6v6h-6zM8 8h5.500v5.500H8z" fill="#fff" strokeWidth="1.500" /></g>,
  clean: <g><circle cx="9" cy="9" r="7.500" fill="#aab4c0" stroke="#8b95a2" /><path d="M9 10l4-5" stroke="#eee" strokeWidth="1.400" /></g>,
  full: <path d="M2 3h14v12H2zM5 12l3-3M5 9v3h3M13 6l-3 3M10 6h3v3" strokeWidth="1.300" />,
};

const Svg = styled.svg<{ $s: number }>`
  width: ${p => p.$s}px; height: ${p => p.$s}px; flex: none; display: block;
`;
const Icon = ({ n, s = 18 }: { n: string; s?: number }) => (
  <Svg $s={s} viewBox="0 0 18 18" fill="none" stroke={G} strokeWidth="1" aria-hidden="true">{glyphs[n]}</Svg>
);
const CaretSvg = styled.svg`width: 8px; height: 5px; flex: none; display: block; pointer-events: none;`;
const Caret = ({ c = '#555' }: { c?: string }) => <CaretSvg viewBox="0 0 8 5" aria-hidden="true"><path d="M0 0h8L4 5z" fill={c} /></CaretSvg>;
const SmallCaret = () => <CaretSvg viewBox="-1 -1 10 7" aria-hidden="true"><path d="M0 0h8L4 5z" fill="#666" /></CaretSvg>;

/* ---------- shared controls ---------- */

const flat = css`border: 0; background: none; padding: 0; display: flex; align-items: center; justify-content: center; flex: none;`;
const IconButton = styled.button<{ $w?: number; $h?: number }>`
  ${flat} width: ${p => p.$w ?? 24}px; height: ${p => p.$h ?? 24}px;
`;
const TextButton = styled.button`${flat} white-space: nowrap;`;
const Divider = styled.span<{ $h: number; $c?: string; $m?: number }>`
  width: 1px; height: ${p => p.$h}px; background: ${p => p.$c ?? '#dcdcdc'}; margin: 0 ${p => p.$m ?? 0}px; flex: none;
`;
const Combo = styled.label<{ $w?: number; $h?: number; $plain?: boolean }>`
  display: flex; align-items: center; flex: none; width: ${p => p.$w}px; height: ${p => p.$h ?? 22}px;
  ${p => (p.$plain ? 'gap: 3px;' : 'gap: 5px; padding: 0 1px 0 4px; background: #fff; border: 1px solid #d2d2d2;')}
`;
const Select = styled.select`
  appearance: none; border: 0; background: transparent; padding: 0; flex: 1; min-width: 0; outline: 0;
`;
const Rule = styled.span`width: 64px; height: 1px; background: #333; flex: none;`;

/* ---------- header ---------- */

const Page = styled.div`display: flex; flex-direction: column; height: 100vh; overflow: hidden;`;
const Header = styled.header`background: #d9d9d9; height: 52px; flex: none; display: flex; flex-direction: column; justify-content: space-between;`;
const TitleBar = styled.div`display: grid; grid-template-columns: 580px 1fr 606px; align-items: center; height: 28px;`;
const Row = styled.div<{ $gap?: number }>`display: flex; align-items: center; gap: ${p => p.$gap ?? 0}px;`;
const Logo = styled.span`width: 4px; height: 22px; background: #b3123f; margin-right: 1px;`;
const Share = styled(TextButton)`gap: 4px; color: #2c8fdd;`;
const AppTitle = styled.h1`font-size: 12px; font-weight: 400; margin: 0; white-space: nowrap; color: #4a4a4a; display: flex; gap: 24px;`;
const SearchInput = styled.input`
  width: 180px; height: 22px; border: 1px solid #bbb; background: #fff; padding: 0 4px; font-style: italic;
  margin: 0 3px 0 4px;
  &::placeholder { color: #666; opacity: 1; }
`;
const Spacer = styled.span<{ $w?: number }>`${p => (p.$w ? `width: ${p.$w}px; flex: none;` : 'flex: 1;')}`;
const Tabs = styled.nav`display: flex; margin-left: -32px; height: 20px;`;
const Tab = styled.button<{ $on?: boolean }>`
  ${flat} height: 20px; padding: 1px 10px 0; background: ${p => (p.$on ? '#f4f4f4' : 'none')}; white-space: nowrap;
`;
const MiniBox = styled.span`
  width: 16px; height: 9px; border: 1px solid #555; display: flex; align-items: center; justify-content: center; margin-right: 3px;
  & svg { transform: rotate(180deg); width: 4px; height: 3px; }
`;

/* ---------- ribbon ---------- */

const Ribbon = styled.section`display: flex; height: 100px; flex: none; background: #f4f4f4; border-bottom: 1px solid #d0d0d0;`;
const Panel = styled.div<{ $last?: boolean }>`
  display: flex; flex-direction: column; padding-top: 4px; flex: none; border-right: ${p => (p.$last ? '0' : '1px solid #dedede')};
`;
const PanelBody = styled.div`display: flex; align-items: stretch; height: 75px;`;
const PanelTitle = styled.div<{ $l?: number; $r?: number }>`
  display: flex; align-items: center; justify-content: center; height: 20px; padding: 1px ${p => p.$r ?? 0}px 0 ${p => p.$l ?? 0}px;
`;
const BigButton = styled.button<{ $w: number; $cut?: number }>`
  ${flat} flex-direction: column; justify-content: flex-start; gap: 3px; width: ${p => p.$w}px; white-space: nowrap; padding-top: 3px;
  margin-left: ${p => -(p.$cut ?? 0)}px;
`;
const IconGrid = styled.div<{ $cols: string }>`
  display: grid; grid-template-columns: ${p => p.$cols}; grid-auto-rows: 25px; align-items: center;
`;
const ComboCol = styled.div`display: flex; flex-direction: column; gap: 3px; padding-top: 1px;`;
const FadeRow = styled.div`
  display: flex; width: 200px; height: 22px; background: #eee; border: 1px solid #d9d9d9;
  & label { width: 98px; background: #dcdcdc; color: #a5a5a5; padding-left: 4px; white-space: nowrap; line-height: 20px; }
  & input { width: 27px; margin-left: auto; border: 0; border-left: 1px solid #d2d2d2; background: #fff; padding: 0 0 0 3px; }
`;
const MenuLogo = styled.svg`width: 32px; height: 31px; flex: none;`;

/* ---------- work area ---------- */

const Work = styled.main`display: flex; flex: 1; min-height: 0; padding: 4px 0 2px; background: #f4f4f4;`;
const SidePanel = styled.aside`
  width: 114px; flex: none; margin: 2px 4px 3px 0; display: flex; flex-direction: column; overflow: hidden;
  background: #efefee; border-bottom: 1px solid #d5d5d5; color: #222;
`;
const SideHead = styled.h2`
  margin: 0; height: 23px; flex: none; background: #d9d9d9; font-size: 12px; font-weight: 400; line-height: 20px; border-radius: 0 3px 0 0; color: #444;
  & span { margin-left: -21px; }
`;
const SideList = styled.ul<{ $foot?: boolean }>`
  list-style: none; margin: 0; padding: ${p => (p.$foot ? '3px 0 5px' : '6px 0 0')};
  flex: ${p => (p.$foot ? 'none' : '1')}; min-height: 0; overflow: hidden;
  ${p => p.$foot && 'border-top: 1px solid #999; background: #f3f3f3;'}
  & li { height: 18px; }
  & button { ${flat} justify-content: flex-start; height: 18px; margin-left: -7px; white-space: pre; }
  & hr { margin: 2px 0 3px; border: 0; height: 1px; background: #bbb; }
  & hr.thick { margin: 1px 0 2px; height: 2px; background: #8c8c8c; }
`;
const Middle = styled.div`flex: 1; min-width: 0; display: flex; flex-direction: column; margin-right: 5px;`;
const Upper = styled.div`flex: 1; min-height: 0; display: flex; gap: 2px; padding-right: 2px;`;
const ToolCol = styled.div`
  width: 26px; flex: none; align-self: flex-start; display: flex; flex-direction: column; align-items: flex-start;
  border: 1px solid #c9c9c9; background: #f7f7f7; padding-left: 1px;
`;
const Grip = styled.span`width: 14px; height: 3px; margin: 2px 3px; border-top: 1px dotted #888; border-bottom: 1px dotted #888;`;
const Center = styled.div`flex: 1; min-width: 0; display: flex; flex-direction: column; gap: 5px; margin: 0 2px 7px 1px;`;
const Canvas = styled.div`flex: 1; min-height: 0; background: #000; position: relative; overflow: hidden; color: #d0d0d0;`;
const DrawingSvg = styled.svg`position: absolute; inset: 0; width: 100%; height: 100%;`;
const ViewLabel = styled.div`position: absolute; left: 4px; top: 5px;`;
const WinButtons = styled.div`position: absolute; right: 6px; top: 5px; display: flex;`;
const CubeSvg = styled.svg`position: absolute; right: 16px; top: 36px; width: 134px; height: 140px;`;
const Wcs = styled.button`
  position: absolute; right: 59px; top: 193px; width: 48px; height: 18px; border: 1px solid #9c9ca8; border-radius: 4px;
  background: #6f6f7c; color: #aaaab2; font: 11px/14px "Liberation Sans", sans-serif; padding: 0 3px; display: flex; align-items: center; justify-content: space-between;
`;
const NavBar = styled.div`
  position: absolute; right: 4px; top: 236px; width: 32px; height: 212px; background: #484848; border-radius: 4px;
  display: flex; flex-direction: column; align-items: center; padding: 16px 0 14px; justify-content: space-between;
  & svg { stroke: #313131; }
`;
const UcsSvg = styled.svg`position: absolute; left: 10px; bottom: 10px; width: 90px; height: 80px;`;
const Prompt = styled.div`
  position: absolute; left: 920px; top: 586px; height: 24px; padding: 0 15px 0 3px; background: #999; border: 1px solid #c8c8c8;
  color: #111; line-height: 20px; white-space: nowrap;
`;
const BottomBar = styled.div`
  display: flex; align-items: center; align-self: flex-start; height: 24px; border: 1px solid #cacaca; background: #f7f7f7; padding: 0 0 0 8px;
  position: relative;
`;
const VGrip = styled.span`width: 3px; height: 14px; border-left: 1px dotted #999; border-right: 1px dotted #999; position: absolute; left: 2px; top: 4px;`;

const Command = styled.section`display: flex; height: 60px; flex: none; border-bottom: 1px solid #d0d0d0;`;
const Gutter = styled.div`width: 25px; background: #d9d9d9; display: flex; flex-direction: column; align-items: center; justify-content: space-between; padding-top: 2px; flex: none;`;
const CmdBody = styled.div`flex: 1; display: flex; flex-direction: column; font: 11px/16px ${mono}; color: #222;`;
const History = styled.div`
  flex: 1; background: #c8c8c8; padding: 5px 3px 0; color: #444;
  & p { margin: 0; height: 16px; white-space: pre; }
`;
const Cn = styled.span`font-size: 13px;`;
const CmdLine = styled.label`
  display: flex; align-items: center; height: 21px; background: #fff; padding: 1px 0 0 4px; white-space: pre;
  & b { margin: 0 6px 0 7px; }
`;

/* ---------- properties ---------- */

const Props = styled.aside`width: 172px; flex: none; margin-top: 2px; overflow: hidden; color: #555;`;
const PropsHead = styled.h2`
  margin: 0 0 12px; height: 23px; background: #d9d9d9; font-size: 12px; font-weight: 400; line-height: 18px; display: flex; align-items: flex-start; gap: 7px; padding-left: 5px;
  border-radius: 4px 0 0 0; color: #444;
  & i { width: 3px; height: 12px; margin-top: 5px; border-left: 1px dotted #888; border-right: 1px dotted #888; }
`;
const PickRow = styled.div`display: flex; align-items: center; gap: 7px; padding-left: 5px; margin-bottom: 3px; height: 23px;`;
const Group = styled.section`
  margin: 0 0 4px 9px;
  & h3 { margin: 0; height: 21px; background: #d9d9d9; font-size: 12px; line-height: 20px; font-weight: 700; padding-left: 7px; color: #444; }
`;
const PropTable = styled.table`
  border-collapse: separate; border-spacing: 0; table-layout: fixed; width: 147px; margin-left: 16px;
  & th, & td { height: 21px; padding: 0 0 1px 6px; border: 0 solid #dadada; border-width: 0 0 1px 1px; text-align: left; font-weight: 400; line-height: 18px; white-space: nowrap; overflow: hidden; }
  & th { width: 71px; vertical-align: top; }
  & td { padding: 1px 0 0 4px; color: #444; }
`;
const Value = styled.span<{ $dim?: boolean }>`display: flex; align-items: center; gap: 6px; color: ${p => (p.$dim ? '#a2a2a2' : '#444')};`;
const Line40 = styled.span`width: 41px; height: 1px; background: #444; flex: none;`;

/* ---------- status bar ---------- */

const Status = styled.footer`display: flex; height: 30px; flex: none; background: #d9d9d9; overflow: hidden; justify-content: space-between;`;
const LayoutTabs = styled.div`display: flex; align-items: flex-start; padding-left: 6px; height: 26px;`;
const LayoutTab = styled.button<{ $on?: boolean }>`
  ${flat} height: 26px; ${p => (p.$on
    ? 'width: 57px; background: #fbfbfb; font-weight: 500; clip-path: polygon(16% 0, 100% 0, 84% 100%, 0 100%);'
    : 'width: 44px;')}
`;
const Slash = styled.span`width: 1px; height: 16px; background: #b5b5b5; margin: 5px 7px 0; transform: rotate(24deg);`;
const Tray = styled.div`display: flex; align-items: flex-start; padding-top: 3px; flex: none;`;
const Seg = styled.div<{ $mr?: number; $w?: number }>`
  display: flex; align-items: center; height: 24px; background: #f2f2f2; margin-right: ${p => p.$mr ?? 0}px;
  ${p => p.$w && `width: ${p.$w}px;`}
`;
const Coord = styled.output`flex: 1; text-align: right; padding-right: 4px;`;
const Toggle = styled.button<{ $on?: boolean; $w?: number }>`
  ${flat} width: ${p => p.$w ?? 23}px; margin: 0 1px; height: 23px; ${p => p.$on && 'background: #cfe3fa; border: 1px solid #5c86b5;'}
`;

/* ---------- data ---------- */

const tabs = ['默认', '插入', '注释', '参数化', '视图', '管理', '输出', '附加模块', '协作', '精选应用', '天正给排水', 'Express Tools'];
const W = '\u3000\u3000';
const sideGroups = [
  [`设${W}置`, `建${W}筑`, `管${W}线`, `平${W}面`, '平面消防', '虹吸雨水', `系${W}统`, '水 泵 间', `计${W}算`],
  ['住宅参数', '给水计算'],
  ['排水原理', '排水计算', '餐废流量'],
  ['消防系统', '消防计算', '消防概算'],
  ['喷淋管径', '喷淋计算'],
  ['住宅简算', '气灭简算', '单位换算', '用 水 量', '热用水量', '水箱计算', '气压水罐', '贮 水 池', '减压孔板', '消 火 栓', '灭 火 器', '水锤压力'],
];
const sideFoot = ['专业标注', '尺寸标注', '文字表格', `图${W}库`, `图${W}层`, '绘图工具', '文件布图', `帮${W}助`];
const draw = ['line', 'xline', 'pline', 'polygon', 'rect', 'arc', 'circle', 'cloud', 'spline', 'ellipse', 'earc', 'insert', 'mkblock', 'point', 'hatch', 'grad', 'region', 'table', 'text'];
const modTail = ['move', 'rotate', 'scale', 'stretch', 'trim', 'extend', 'breakpt', 'breakg', 'join', 'chamfer', 'fillet'];
const modA = ['erase', 'copy', 'mirror', 'offset', 'array', ...modTail, 'blend', 'explode'];
const modB = ['erase', 'copy', 'mirror', 'offset', ...modTail, 'explode', 'alignA', 'alignB', 'alignC', 'order', 'slashes'];
const pipes = Array.from({ length: 37 }, (_, i) => `p${i + 1}`);
const symbols = Array.from({ length: 15 }, (_, i) => `s${i + 1}`);

type Prop = [string, string, ('dim' | 'swatch' | 'line')?];
const groups: { title: string; rows: Prop[] }[] = [
  { title: '常规', rows: [['颜色', 'ByLayer', 'swatch'], ['图层', '0'], ['线型', 'ByLayer', 'line'], ['线型比例', '1'], ['线宽', 'ByLayer', 'line'], ['透明度', 'ByLayer'], ['厚度', '0']] },
  { title: '三维效果', rows: [['材质', 'ByLayer']] },
  { title: '打印样式', rows: [['打印样式', 'ByColor', 'dim'], ['打印样式表', '无'], ['打印表附...', '模型', 'dim'], ['打印表类型', '不可用', 'dim']] },
  { title: '视图', rows: [['圆心 X...', '40390', 'dim'], ['圆心 Y 坐...', '27717', 'dim'], ['圆心 Z 坐...', '0', 'dim'], ['高度', '57438', 'dim'], ['宽度', '109170', 'dim']] },
  { title: '其他', rows: [['注释比例', '1:1'], ['打开 UC...', '是'], ['在原点显...', '否'], ['每个视口...', '是'], ['UCS 名称', ''], ['视觉样式', '二维线框']] },
];

/* ---------- pipe riser diagram ---------- */

const green = '#3f9a46';
const Floor = ({ x, y, name, level }: { x: number; y: number; name: string; level: string }) => (
  <g>
    <path d={`M${x} ${y}.5h73`} stroke="#e6e6e6" />
    <path d={`M${x + 16} ${y - 3.5}h${level.length > 5 ? 28 : 24}M${x + 17} ${y - 3.5}l3 3.500 4-3.500`} stroke={green} fill="none" />
    <text x={x} y={y - 1} fontSize="7" fontWeight="700" fill="#fff">{name}</text>
    <text x={x + 24} y={y - 5} fontSize="7" fontWeight="700" fill="#eee">{level}</text>
  </g>
);
const Branch = ({ x, y }: { x: number; y: number }) => (
  <g><path d={`M${x} ${y}h9`} stroke="#aaa" /><path d={`M${x + 1} ${y - 1}h3`} stroke="#fff" strokeWidth="2" /><circle cx={x + 8} cy={y} r="1.500" fill="#ddd" /></g>
);
const Break = ({ x }: { x: number }) => <path d={`M${x - 2} 538.500h4M${x - 2} 541.500h4`} stroke="#ddd" />;

const Riser = () => {
  const left: [string, string][] = [['屋面', '18.000'], ['6层', '15.000'], ['5层', '12.000'], ['4层', '9.000'], ['3层', '6.000'], ['2层', '3.000'], ['1层', '±0.000']];
  const right: [string, string][] = [['屋面', '15.000'], ['5层', '12.000'], ['4层', '9.000'], ['3层', '6.000'], ['2层', '3.000'], ['1层', '±0.000']];
  const step = 39.5;
  return (
    <DrawingSvg role="img" aria-label="给水系统图" fontFamily='"Liberation Sans", "Noto Sans CJK SC", sans-serif'>
      <path d="M518 0v20M515.500 5h5M515.500 8h5" stroke={green} strokeWidth="1.500" />
      {left.map(([n, l], i) => <Floor key={n} x={497} y={Math.round(284 + i * step)} name={n} level={l} />)}
      {right.map(([n, l], i) => <Floor key={n} x={795} y={Math.round(322.5 + i * step)} name={n} level={l} />)}
      <path d="M564 280v277M695 280v277M861 319v238M564 556.500h415" stroke={green} strokeWidth="1.500" fill="none" />
      {[0, 1, 2, 3, 4, 5].map(i => <g key={i}><Branch x={564} y={320 + i * step} /><Branch x={695} y={320 + i * step} />{i > 0 && <Branch x={861} y={319 + i * step} />}</g>)}
      <Break x={564} /><Break x={695} /><Break x={861} />
      <path d="M889.500 555.500h28v28h-28z" fill="none" stroke="#fff" strokeWidth="1.300" />
      <circle cx="899" cy="575" r="14" fill="#d2d200" fillOpacity=".93" />
    </DrawingSvg>
  );
};

const ViewCube = () => (
  <CubeSvg viewBox="1461 192 134 140" aria-label="视图方位" fontFamily='"Noto Sans CJK SC", sans-serif' fontSize="19" fontWeight="500" fill="#ababab" textAnchor="middle">
    <circle cx="1528" cy="262" r="54" fill="none" stroke="#363636" strokeWidth="13" />
    <path d="M1503 236h51v51h-51z" fill="#9b9b9b" />
    <path d="M1512 245h33v33h-33z" fill="#939598" />
    <text x="1528" y="213">北</text><text x="1528" y="327">南</text><text x="1472" y="270">西</text><text x="1585" y="270">东</text>
    <text x="1528" y="272" fontSize="29" fontWeight="400" fill="#4c4c4c">上</text>
  </CubeSvg>
);

const Drop = ({ label, w = 14 }: { label: string; w?: number }) => <IconButton $w={w} aria-label={label}><SmallCaret /></IconButton>;

const ToolStrip = ({ label, items }: { label: string; items: string[] }) => (
  <ToolCol role="toolbar" aria-label={label}>
    <Grip />
    {items.map(n => <IconButton key={n} $w={22} $h={22} aria-label={n}><Icon n={n} /></IconButton>)}
  </ToolCol>
);

const St = ({ n, on, w }: { n: string; on?: boolean; w?: number }) => <Toggle $on={on} $w={w} aria-label={n} aria-pressed={!!on}><Icon n={n} s={17} /></Toggle>;

export default function App() {
  return (
    <Page>
      <GlobalStyle />
      <Header>
        <TitleBar>
          <Row>
            <Logo />
            <Drop label="应用程序菜单" w={16} />
            {['new', 'open', 'save', 'saveas', 'webopen', 'websave', 'print', 'undo'].map(n => <IconButton key={n} aria-label={n}><Icon n={n} s={17} /></IconButton>)}
            <Drop label="放弃列表" w={12} />
            <IconButton aria-label="redo"><Icon n="redo" s={17} /></IconButton>
            <Drop label="重做列表" w={12} />
            <IconButton $w={18} aria-label="自定义快速访问工具栏"><Icon n="more" s={14} /></IconButton>
            <Share><Icon n="share" s={17} />共享</Share>
          </Row>
          <AppTitle><span>T20天正给排水软件 V10.0 For Autodesk AutoCAD 2024</span><span>Drawing1.dwg</span></AppTitle>
          <Row>
            <CaretSvg viewBox="0 0 8 5"><path d="M2 0v5l4-2.500z" fill="#555" /></CaretSvg>
            <SearchInput placeholder="键入关键字或短语" aria-label="搜索" />
            <IconButton $w={16} aria-label="搜索"><Icon n="search" s={16} /></IconButton>
            <Spacer $w={6} />
            <TextButton><Icon n="user" s={18} /><Spacer $w={4} />登录</TextButton>
            <Spacer $w={57} />
            <Drop label="登录选项" />
            <IconButton $w={27} aria-label="应用商店"><Icon n="cart" s={15} /></IconButton>
            <IconButton $w={21} aria-label="Autodesk"><Icon n="autodesk" s={17} /></IconButton>
            <Drop label="Autodesk 选项" w={12} />
            <Divider $h={22} $c="#efefef" $m={6} />
            <IconButton aria-label="帮助"><Icon n="help" /></IconButton>
            <Drop label="帮助选项" w={12} />
            <Spacer />
            <IconButton aria-label="最小化"><Icon n="min" s={14} /></IconButton>
            <Spacer $w={22} />
            <IconButton aria-label="还原"><Icon n="restore" s={14} /></IconButton>
            <Spacer $w={21} />
          </Row>
        </TitleBar>
        <Tabs>
          {tabs.map(t => <Tab key={t} $on={t === '天正给排水'}>{t}</Tab>)}
          <Spacer $w={24} />
          <TextButton aria-label="功能区显示"><MiniBox><Caret /></MiniBox><SmallCaret /></TextButton>
        </Tabs>
      </Header>

      <Ribbon>
        <Panel>
          <PanelBody>
            <BigButton $w={48} $cut={21}>
              <MenuLogo viewBox="0 0 32 31" aria-hidden="true">
                <defs><linearGradient id="menuBlue" x2="0" y2="1"><stop stopColor="#4a9be0" /><stop offset="1" stopColor="#0d4f80" /></linearGradient></defs>
                <path d="M0 0h31v4H0zM0 26h31v5H0zM0 6h16v18H0zM19 6h3v18h-3zM22 6h9v4h-9zM22 13h9v4h-9zM22 20h9v4h-9z" fill="url(#menuBlue)" />
              </MenuLogo>
              <span>天正菜单</span>
              <SmallCaret />
            </BigButton>
            <Spacer $w={18} />
            <Divider $h={72} />
            <Spacer $w={4} />
            <IconGrid $cols="25px 25px 12px 26px">
              <IconButton aria-label="剪切"><Icon n="cut" /></IconButton><IconButton aria-label="缩放"><Icon n="zoomx" /></IconButton><Drop label="缩放选项" w={12} /><IconButton aria-label="隐藏"><Icon n="eyex" s={17} /></IconButton>
              <IconButton aria-label="复制"><Icon n="copy" /></IconButton><IconButton aria-label="动态观察"><Icon n="orbit" /></IconButton><Drop label="观察选项" w={12} /><IconButton aria-label="全部"><Icon n="target" s={17} /></IconButton>
              <IconButton aria-label="粘贴"><Icon n="paste" /></IconButton><IconButton aria-label="平移"><Icon n="pan" /></IconButton><span /><IconButton aria-label="显示"><Icon n="eyeok" s={17} /></IconButton>
            </IconGrid>
          </PanelBody>
          <PanelTitle $r={32}>常用命令</PanelTitle>
        </Panel>

        <Panel>
          <PanelBody>
            <Spacer $w={4} />
            <BigButton $w={62}>
              <Svg $s={32} viewBox="0 0 32 32" fill="#e6e6e6" stroke="#555" aria-hidden="true"><path d="M3 22l13-7 13 7-13 8zM3 16l13-7 13 7-13 8zM3 9l13-7 13 7-13 8z" /></Svg>
              <span>图层管理器</span>
            </BigButton>
            <Spacer $w={3} />
            <ComboCol>
              <FadeRow><label htmlFor="fade">锁定的图层淡入</label><input id="fade" defaultValue="50%" /></FadeRow>
              <Combo $w={200}><Select aria-label="图层状态"><option>未保存的图层状态</option></Select><Caret /></Combo>
              <Combo $w={200}><Icon n="bulbO" s={15} /><Icon n="sunO" s={15} /><Icon n="unlockO" s={15} /><Icon n="box" s={15} /><Select aria-label="当前图层"><option>0</option></Select><Caret /></Combo>
            </ComboCol>
            <Divider $h={72} $m={5} />
            <IconGrid $cols="25px">{['layerA', 'layerB', 'layerC'].map(n => <IconButton key={n} aria-label={n}><Icon n={n} s={17} /></IconButton>)}</IconGrid>
            <Divider $h={72} $m={5} />
            <IconGrid $cols="24px 24px 24px">
              {['bulb', 'bulbh', 'target', 'snow', 'snowh', 'target', 'lock', 'lockh', 'target'].map((n, i) => <IconButton key={i} aria-label={n}><Icon n={n} s={16} /></IconButton>)}
            </IconGrid>
            <Divider $h={72} $m={4} />
            <IconGrid $cols="24px">{['wheel', 'weights', 'types'].map(n => <IconButton key={n} aria-label={n}><Icon n={n} s={17} /></IconButton>)}</IconGrid>
            <ComboCol>
              <Combo $w={180}><Icon n="box" s={17} /><Select aria-label="颜色"><option>ByLayer</option></Select><Caret /></Combo>
              <Combo $w={180}><Rule /><Select aria-label="线宽"><option>ByLayer</option></Select><Caret /></Combo>
              <Combo $w={180}><Rule /><Select aria-label="线型"><option>BYLAYER</option></Select><Caret /></Combo>
            </ComboCol>
            <Spacer $w={2} />
          </PanelBody>
          <PanelTitle>天正图层</PanelTitle>
        </Panel>

        <Panel $last>
          <PanelBody>
            <Spacer $w={2} />
            <IconGrid $cols="repeat(5, 24px)">{symbols.map(n => <IconButton key={n} aria-label={n}><Icon n={n} s={17} /></IconButton>)}</IconGrid>
          </PanelBody>
          <PanelTitle $l={33}>符号标注<Spacer /><Svg $s={8} viewBox="0 0 8 8" fill="none" stroke="#555"><path d="M1 1l5 5M6.500 2.500v4h-4" /></Svg></PanelTitle>
        </Panel>
      </Ribbon>

      <Work>
        <SidePanel>
          <SideHead><span>天正给排水</span></SideHead>
          <SideList>
            {sideGroups.map((g, gi) => (
              <React.Fragment key={gi}>
                {gi > 0 && <hr className={gi === 1 ? 'thick' : ''} />}
                {g.map(t => <li key={t}><button>{t}</button></li>)}
              </React.Fragment>
            ))}
          </SideList>
          <SideList $foot>{sideFoot.map(t => <li key={t}><button>{t}</button></li>)}</SideList>
        </SidePanel>

        <Middle>
          <Upper>
            <ToolStrip label="绘图" items={[...draw, 'swap']} />
            <ToolStrip label="绘图 2" items={draw} />
            <Center>
              <Canvas>
                <Riser />
                <ViewLabel>[−] [俯视] [二维线框]</ViewLabel>
                <WinButtons>
                  <IconButton $w={20} $h={20} aria-label="最小化视口"><Svg $s={12} viewBox="0 0 12 12"><path d="M1 7h10v3H1z" fill="#eee" /></Svg></IconButton>
                  <IconButton $w={20} $h={20} aria-label="还原视口"><Svg $s={12} viewBox="0 0 12 12" fill="none" stroke="#eee" strokeWidth="2"><path d="M1.500 4.500h6v6h-6zM4 3V1.500h6.500V8H9" /></Svg></IconButton>
                  <IconButton $w={20} $h={20} aria-label="关闭视口"><Svg $s={12} viewBox="0 0 12 12" fill="none" stroke="#eee" strokeWidth="2.500"><path d="M2 2l8 8M10 2l-8 8" /></Svg></IconButton>
                </WinButtons>
                <ViewCube />
                <Wcs>WCS<Caret c="#8a8a96" /></Wcs>
                <NavBar>
                  <Svg $s={26} viewBox="0 0 18 18" fill="none"><path d="M9 2h7v7a7 7 0 1 1-7-7z" /><circle cx="9" cy="9" r="4.500" /><circle cx="9" cy="9" r="2" /></Svg>
                  <Caret c="#2c2c2c" />
                  <Svg $s={26} viewBox="0 0 18 18" fill="none">{Hand}</Svg>
                  <Svg $s={26} viewBox="0 0 18 18" fill="none"><path d="M2 2l8 8M15 2L2 15M2 6V2h4M11 2h4v4M2 11v4h4" /><circle cx="12" cy="12" r="3" fill="#484848" /><path d="M14 14l3 3" strokeWidth="2" /></Svg>
                  <Caret c="#2c2c2c" />
                  <Svg $s={24} viewBox="0 0 18 18" fill="none"><ellipse cx="9" cy="10" rx="8" ry="3" /><path d="M7.500 16V5H5l4-4 4 4h-2.500v11z" /></Svg>
                  <Caret c="#2c2c2c" />
                  <Svg $s={24} viewBox="0 0 18 18" fill="none"><path d="M1 1h4v3H1zM7 1h4v3H7zM13 1h4v3h-4zM1 7h12v9H1z" /><path d="M5 9l5 2.500L5 14z" fill="#2c2c2c" /></Svg>
                </NavBar>
                <UcsSvg viewBox="185 821 90 80" fill="none" stroke="#c8c8c8" aria-label="UCS 图标">
                  <path d="M190.500 887.500h9v9h-9zM195 892V842M195 892.500h50M196 825l7 6 7-6M203 831v6M250 878l13 13M263 878l-13 13" />
                </UcsSvg>
                <Prompt>请选择每层支管末端的断管符号或水龙头:&lt;修改楼栋编号&gt;</Prompt>
              </Canvas>
              <BottomBar role="toolbar" aria-label="给排水工具">
                <VGrip />
                {pipes.slice(0, 5).map(n => <IconButton key={n} $w={23} $h={22} aria-label={n}><Icon n={n} s={16} /></IconButton>)}
                <Divider $h={18} $c="#bbb" $m={2} />
                {pipes.slice(5).map(n => <IconButton key={n} $w={23} $h={22} aria-label={n}><Icon n={n} s={16} /></IconButton>)}
              </BottomBar>
            </Center>
            <ToolStrip label="修改" items={modA} />
            <ToolStrip label="修改 2" items={modB} />
          </Upper>
          <Command>
            <Gutter>
              <Grip />
              <IconButton $w={20} $h={18} aria-label="关闭命令行"><Icon n="close" s={13} /></IconButton>
              <IconButton $w={20} $h={22} aria-label="自定义"><Icon n="wrench" s={17} /></IconButton>
            </Gutter>
            <CmdBody>
              <History>
                <p><Cn>命令</Cn>: *<Cn>取消</Cn>*</p>
                <p><Cn>命令</Cn>: xgdL</p>
              </History>
              <CmdLine>
                <Icon n="prompt" s={17} /><Spacer $w={2} /><Caret />
                <b>XGDL</b><Cn>请选择每层支管末端的断管符号或水龙头</Cn>:&lt;<Cn>修改楼栋编号</Cn>&gt;
              </CmdLine>
            </CmdBody>
          </Command>
        </Middle>

        <Props>
          <PropsHead><i />特性</PropsHead>
          <PickRow>
            <Combo $w={120} $h={23}><Select aria-label="选择对象"><option>无选择</option></Select><Caret /></Combo>
            <IconButton $w={18} aria-label="切换 PICKADD"><Icon n="pickadd" s={17} /></IconButton>
            <IconButton $w={18} aria-label="选择对象"><Icon n="qselect" s={18} /></IconButton>
          </PickRow>
          {groups.map(g => (
            <Group key={g.title}>
              <h3>{g.title}</h3>
              <PropTable>
                <tbody>
                  {g.rows.map(([k, v, kind]) => (
                    <tr key={k}>
                      <th scope="row">{k}</th>
                      <td><Value $dim={kind === 'dim'}>{kind === 'swatch' && <Icon n="box" s={15} />}{kind === 'line' && <Line40 />}{v}</Value></td>
                    </tr>
                  ))}
                </tbody>
              </PropTable>
            </Group>
          ))}
        </Props>
      </Work>

      <Status>
        <LayoutTabs>
          <LayoutTab $on>模型</LayoutTab>
          <LayoutTab>布局1</LayoutTab>
          <Slash />
          <IconButton aria-label="新建布局"><Icon n="plus" s={15} /></IconButton>
          <Slash />
        </LayoutTabs>
        <Tray>
          <Seg $w={72} $mr={1}><Combo as="div" $plain $w={72}><TextButton>比例 1:100</TextButton><Caret /></Combo></Seg>
          <Seg $w={137} $mr={3}><Coord>54492, 13167, 0</Coord></Seg>
          <Seg $w={27} $mr={2}><TextButton>&nbsp;模型</TextButton></Seg>
          <Seg $mr={4}><St n="grid" /><St n="dots" /><Drop label="捕捉选项" /></Seg>
          <Seg $mr={3}><St n="infer" on /><St n="dyn" on /><St n="ortho" /><St n="polar" on /><Drop label="极轴选项" /><St n="iso" /><Drop label="等轴测选项" /></Seg>
          <Seg $mr={6}><St n="otrack" on /><St n="osnap" on /><Drop label="捕捉选项" /><St n="lwt" /><St n="trans" on /><St n="cycle" /><St n="osnap3" /><Drop label="三维捕捉选项" /></Seg>
          <Seg $mr={4}><St n="ducs" on /><St n="filter" /><Drop label="过滤选项" /><St n="gizmo" on /><Drop label="小控件选项" /></Seg>
          <Seg $mr={4}><St n="annoA" on /><St n="annoB" /><St n="annoC" /><Combo as="div" $plain $w={70}><TextButton>1:1 / 100%</TextButton><Caret /></Combo></Seg>
          <Seg $mr={3}><St n="gear" /><Drop label="工作空间" /></Seg>
          <Seg $mr={1}><St n="plus" /></Seg>
          <Seg $mr={1}><St n="ruler" /><Combo $plain $w={71}><Spacer $w={1} /><Select aria-label="单位"><option>小数</option></Select><Caret /></Combo></Seg>
          <Seg $mr={3}><St n="props" /></Seg>
          <Seg $mr={2}><St n="lockui" /><Drop label="锁定选项" /></Seg>
          <Seg $mr={1}><St n="isolate" /><St n="hardware" /></Seg>
          <Seg><St n="clean" on /><St n="full" w={15} /></Seg>
        </Tray>
      </Status>
    </Page>
  );
}
